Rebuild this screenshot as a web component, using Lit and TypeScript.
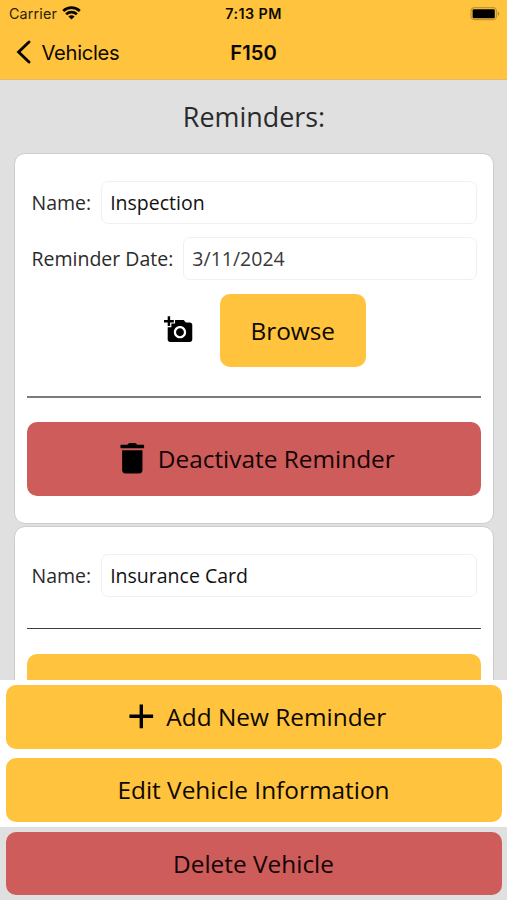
import { LitElement, html, css, svg } from "lit";
import { customElement, property } from "lit/decorators.js";

const ADD = svg`<path d="M19 13h-6v6h-2v-6H5v-2h6V5h2v6h6v2z"/>`;
const TRASH = svg`<path d="M6 19c0 1.1.9 2 2 2h8c1.1 0 2-.9 2-2V7.200H6v11.800zM5.400 4h3.100q.5 0 1-.5t1-.5h3q.5 0 1 .5t1 .5h3.100q.4 0 .4.4v1.200q0 .4-.4.4H5.400q-.4 0-.4-.4V4.400q0-.4.4-.4z"/>`;

@customElement("action-button")
class ActionButton extends LitElement {
  @property() label = "";
  @property() icon = "";
  @property() tone = "amber";

  static styles = css`
    :host { display: block; }
    .button {
      box-sizing: border-box; width: 100%; height: 100%; margin: 0; padding: 0; border: 0;
      border-radius: 10px; display: flex; align-items: center; justify-content: center; gap: 5px;
      font: 24.4px/34px "Open Sans", sans-serif; color: #0d0800; white-space: nowrap;
    }
    .amber { background: #ffc33e; }
    .red { background: #cd5c5b; color: #140304; }
    .icon { width: 40.6px; height: 40.6px; fill: #000; flex: none; }
    .label { padding-top: 1px; }
  `;

  render() {
    return html`<button class="button ${this.tone}">
      ${this.icon
        ? html`<svg class="icon" viewBox="0 0 24 24">${this.icon === "add" ? ADD : TRASH}</svg>`
        : null}<span class="label">${this.label}</span>
    </button>`;
  }
}

@customElement("form-field")
class FormField extends LitElement {
  @property() label = "";
  @property() value = "";
  @property() tone = "";

  static styles = css`
    :host { display: flex; align-items: center; height: 42.5px; gap: 10px;
      font: 19.5px/28px "Open Sans", sans-serif; color: #2b2b2b; }
    .label { flex: none; padding-top: 2px; }
    .value { flex: 1; box-sizing: border-box; height: 100%; display: flex; align-items: center;
      border: 1px solid #f0f0f0; border-radius: 7px; padding: 2px 0 0 8px; color: #111; }
    .soft { color: #3a3a3a; }
  `;

  render() {
    return html`<span class="label">${this.label}</span>
      <span class="value ${this.tone}">${this.value}</span>`;
  }
}

@customElement("app-root")
class AppRoot extends LitElement {
  static styles = css`
    :host { display: flex; flex-direction: column; width: 507px; height: 900px; overflow: hidden;
      background: #e0e0e0; font-family: "Open Sans", sans-serif; }
    .header { flex: none; box-sizing: border-box; height: 80px; background: #ffc33e;
      border-bottom: 1px solid #dfbb70; font-family: Inter, sans-serif; color: #0d0900; }
    .status { display: grid; grid-template-columns: 1fr auto 1fr; align-items: center; height: 27px;
      padding: 0 7px; font-size: 14.3px; }
    .carrier { display: flex; align-items: center; gap: 5px; padding-left: 2px; letter-spacing: .15px; color: #2a1f08; }
    .wifi { width: 19px; height: 14px; margin-top: -2px; }
    .time { font-weight: 600; letter-spacing: .45px; }
    .battery { width: 30px; height: 14px; justify-self: end; }
    .nav { display: grid; grid-template-columns: 1fr auto 1fr; align-items: center; height: 50px;
      padding: 0 16px; font-size: 20.2px; }
    .back { display: flex; align-items: center; gap: 10.5px; letter-spacing: -.3px; }
    .chevron { width: 15px; height: 24px; }
    .title { font-weight: 600; }
    .scroll { flex: none; height: 600px; overflow: hidden; }
    .heading { margin: 0; height: 73px; line-height: 73px; text-align: center; padding-left: 1px;
      font-size: 26.900px; font-weight: 400; color: #2b2b2b; }
    .card { box-sizing: border-box; margin: 0 13.5px; border: 1px solid #cdcdcd; border-radius: 11px;
      background: #fff; padding: 27px 12px; height: 371px; }
    .next { margin-top: 2px; }
    .fields { display: flex; flex-direction: column; gap: 13.5px; padding: 0 4px 0 5px; }
    .attach { display: flex; align-items: center; justify-content: center; gap: 26.500px;
      margin-top: 14px; padding-left: 22.500px; }
    .camera { width: 29.5px; height: 29.5px; }
    .browse { width: 146.500px; height: 73px; }
    .rule { height: 2px; background: #7b7b7b; margin: 29px 0 24.500px; }
    .next .rule { height: 1.500px; margin: 31px 0 24.500px; background: #3d3d3d; }
    .wide { height: 73.5px; }
    .panel { flex: none; box-sizing: border-box; height: 147px; padding: 5px 5.500px 4.500px 5.500px; background: #fff;
      display: flex; flex-direction: column; gap: 9.5px; }
    .main { height: 63.500px; }
    .footer { flex: 1; padding: 4.500px 5.500px 0 5.500px; }
  `;

  render() {
    return html`
      <header class="header">
        <div class="status">
          <span class="carrier">Carrier
            <svg class="wifi" viewBox="0 0 19 14" fill="none" stroke="#0a0700" stroke-width="2.7">
              <path d="M1.2 5C5.900.600 13.100.600 17.800 5M4.100 8.200C7.200 5.400 11.800 5.400 14.900 8.200"/>
              <path d="M6.400 10.500C8.200 8.900 10.800 8.900 12.600 10.500L9.500 13.600Z" fill="#0a0700" stroke="none"/>
            </svg>
          </span>
          <span class="time">7:13 PM</span>
          <svg class="battery" viewBox="0 0 30 14">
            <rect x="1" y=".7" width="25.500" height="12" rx="3.600" fill="none" stroke="#c2952f" stroke-width="1.300"/>
            <rect x="2.600" y="2.200" width="22.200" height="9" rx="1.300"/>
            <path d="M27.900 4.400q3 2.300 0 4.600z" fill="#b48a30"/>
          </svg>
        </div>
        <div class="nav">
          <span class="back">
            <svg class="chevron" viewBox="0 0 15 24" fill="none" stroke="#0a0700" stroke-width="2.900" stroke-linecap="round">
              <path d="M13 2L2.600 12L13 22"/>
            </svg>
            Vehicles
          </span>
          <span class="title">F150</span>
        </div>
      </header>
      <main class="scroll">
        <h1 class="heading">Reminders:</h1>
        <section class="card">
          <div class="fields">
            <form-field label="Name:" value="Inspection"></form-field>
            <form-field label="Reminder Date:" value="3/11/2024" tone="soft"></form-field>
          </div>
          <div class="attach">
            <svg class="camera" viewBox="0 0 24 24">
              <path d="M3 4V1h2v3h3v2H5v3H3V6H0V4h3zm3 6V7h3V4h7l1.830 2H21c1.100 0 2 .9 2 2v12c0 1.100-.9 2-2 2H5c-1.100 0-2-.9-2-2V10h3zm7 9c2.760 0 5-2.240 5-5s-2.240-5-5-5-5 2.240-5 5 2.240 5 5 5zm-3.200-5c0 1.770 1.430 3.200 3.200 3.200s3.200-1.430 3.200-3.200-1.430-3.200-3.200-3.200-3.200 1.430-3.200 3.200z"/>
            </svg>
            <action-button class="browse" label="Browse"></action-button>
          </div>
          <div class="rule"></div>
          <action-button class="wide" tone="red" icon="trash" label="Deactivate Reminder"></action-button>
        </section>
        <section class="card next">
          <div class="fields">
            <form-field label="Name:" value="Insurance Card"></form-field>
          </div>
          <div class="rule"></div>
          <action-button class="wide"></action-button>
        </section>
      </main>
      <div class="panel">
        <action-button class="main" icon="add" label="Add New Reminder"></action-button>
        <action-button class="main" label="Edit Vehicle Information"></action-button>
      </div>
      <footer class="footer">
        <action-button class="main" tone="red" label="Delete Vehicle"></action-button>
      </footer>
    `;
  }
}
